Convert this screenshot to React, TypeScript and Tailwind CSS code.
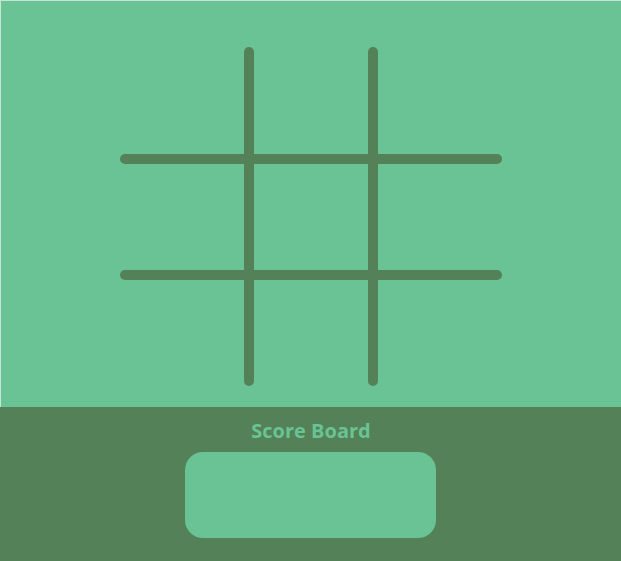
const lines = {
  horizontal: [112, 228],
  vertical: [129, 253],
};

export default function App() {
  return (
    <div className="w-full h-[561px] flex flex-col bg-[#69c394] font-['Open_Sans',sans-serif]">
      <main className="h-[407px] flex justify-center pt-[46px] border-t border-l border-[#c6e6d2]">
        <svg width="382" height="339" viewBox="0 0 382 339">
          {lines.horizontal.map((y) => (
            <line
              key={"h" + y}
              x1="5"
              y1={y}
              x2="377"
              y2={y}
              stroke="#548157"
              strokeWidth="10"
              strokeLinecap="round"
            />
          ))}
          {lines.vertical.map((x) => (
            <line
              key={"v" + x}
              x1={x}
              y1="5"
              x2={x}
              y2="334"
              stroke="#548157"
              strokeWidth="10"
              strokeLinecap="round"
            />
          ))}
        </svg>
      </main>
      <section className="flex-1 bg-[#548157] flex flex-col items-center pt-[14px]">
        <h2 className="text-[#69c394] text-[20px] leading-[20px] font-bold ml-[1px]">
          Score Board
        </h2>
        <div className="mt-[11px] w-[251px] h-[86px] rounded-[18px] bg-[#69c394]"></div>
      </section>
    </div>
  );
}
